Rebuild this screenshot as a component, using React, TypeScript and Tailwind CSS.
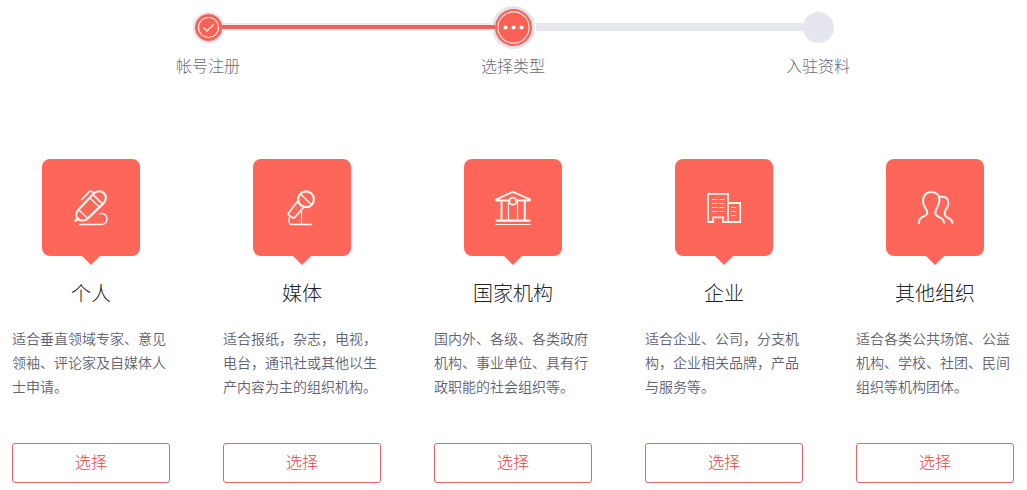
import type { ReactNode } from "react";

type StepState = "done" | "current" | "todo";

const steps: { label: string; state: StepState }[] = [
  { label: "帐号注册", state: "done" },
  { label: "选择类型", state: "current" },
  { label: "入驻资料", state: "todo" },
];

function Icon({ children }: { children: ReactNode }) {
  return (
    <svg
      viewBox="0 0 37 37"
      className="h-[37px] w-[37px]"
      fill="none"
      stroke="#fff6ee"
      strokeWidth="2"
      strokeLinecap="round"
      strokeLinejoin="round"
      aria-hidden="true"
    >
      {children}
    </svg>
  );
}

const PenIcon = () => (
  <Icon>
    <path d="M5 29.8C2.8 27.6 2.6 24 5 21.2L20.4 4.8C24 1.4 28.4 1.6 31 4.2C33.7 6.9 33.6 11.2 30.4 14.4L14.6 29.6C11.6 32.2 7.6 32 5 29.8Z" strokeWidth="2.2" />
    <path d="M2.4 31.8L4.4 30.2" strokeWidth="2.4" />
    <path d="M6.2 21.2L14.4 29M16.8 9L26.4 18" strokeWidth="1.4" />
    <path d="M20.2 5.8L29.4 14.8" strokeWidth="1.8" />
    <path d="M8.8 10.4L17 2L19.8 3" strokeWidth="1.8" />
    <path d="M27 24.6C31 23.8 34 26.4 33.9 29.8C33.8 33.4 31.6 35.5 28 35.5H6.5" strokeWidth="1.4" />
  </Icon>
);

const MicIcon = () => (
  <Icon>
    <circle cx="22" cy="10.3" r="7.9" strokeWidth="2.2" />
    <path d="M16.5 5L27.5 15.8" strokeWidth="1.4" />
    <path d="M13.6 12.4L4.8 23.8C4 25 4.3 26 5.4 26.8L8.2 28.6C9.4 29.3 10.2 28.8 11 28L18.8 19.4" strokeWidth="1.8" />
    <path d="M6 27.4C4.4 29 4.6 34 6.4 35.5H27.6" strokeWidth="1.3" />
    <path d="M17.5 21.6V35.4" strokeWidth="1.2" />
  </Icon>
);

const InstitutionIcon = () => (
  <Icon>
    <path d="M14.4 11.5H1.2V10.4L17.8 2.8L34.8 10.4V11.5H21.4" />
    <circle cx="17.8" cy="12.2" r="3.5" strokeWidth="1.8" />
    <path d="M6.5 12.5V31M29.8 12.5V31" />
    <path d="M13.5 13V31M22.5 13V31" strokeWidth="1.2" />
    <path d="M1.5 31.7H34.5" strokeWidth="2.2" />
    <path d="M.8 35.5H35.2" strokeWidth="1.1" />
  </Icon>
);

const BuildingIcon = () => (
  <Icon>
    <path
      d="M22 33H17.2V28.4H7.2V33H2V4.8H22V33H34.2V14H22"
      strokeWidth="1.8"
      strokeLinejoin="miter"
    />
    <path
      d="M6.5 10.5H11M13.5 10.5H18M6.5 14.5H11M13.5 14.5H18M6.5 18.5H11M13.5 18.5H18M6.5 22.5H11M13.5 22.5H18M25.5 18.5H29.5M25.5 22.5H29.5M25.5 26.5H29.5"
      strokeWidth="1.2"
    />
  </Icon>
);

const PeopleIcon = () => (
  <Icon>
    <path d="M1.8 34C2 30.6 2.6 29.2 5.4 28C8.2 26.8 9.8 26.2 10.2 24.4C10.6 22 9.6 20.8 8.2 18.8C7.4 17.6 6.4 16 6.2 13.8C5.4 7.4 8.4 3.2 14 3.1C19.6 3 22.8 6.4 22.4 11.6C22.2 15 21 17 20 18.8C18.8 20.8 18 22.4 18.4 24.8C18.8 26.8 20.6 27.6 23 28.6C26 29.8 26.8 30.8 27.1 34" />
    <path d="M23.4 7.8C28.2 7 31.4 9.4 31.4 14C31.4 17.2 29.8 19 28.8 20.6C27.8 22.4 27.2 23.8 27.8 25.8C28.4 27.6 29.6 28.4 31.4 29.2C34.2 30.4 35.2 31.4 35.4 34" />
  </Icon>
);

const types: { title: string; text: string; icon: ReactNode }[] = [
  { title: "个人", text: "适合垂直领域专家、意见领袖、评论家及自媒体人士申请。", icon: <PenIcon /> },
  { title: "媒体", text: "适合报纸，杂志，电视，电台，通讯社或其他以生产内容为主的组织机构。", icon: <MicIcon /> },
  { title: "国家机构", text: "国内外、各级、各类政府机构、事业单位、具有行政职能的社会组织等。", icon: <InstitutionIcon /> },
  { title: "企业", text: "适合企业、公司，分支机构，企业相关品牌，产品与服务等。", icon: <BuildingIcon /> },
  { title: "其他组织", text: "适合各类公共场馆、公益机构、学校、社团、民间组织等机构团体。", icon: <PeopleIcon /> },
];

function Track({ kind }: { kind: "none" | "active" | "idle" }) {
  if (kind === "none") return <span className="flex-1" />;
  if (kind === "idle") return <span className="h-2 flex-1 bg-[#e6e6ee]" />;
  return (
    <span className="z-10 flex h-2 flex-1 items-center bg-[#f0e9ef]">
      <span className="-mr-1 h-1 flex-1 bg-[#ea6459]" />
    </span>
  );
}

function StepNode({ state }: { state: StepState }) {
  if (state === "done") {
    return (
      <span className="flex size-[27px] items-center justify-center rounded-full bg-[#fb6157] ring-2 ring-[#ece2e8]">
        <svg viewBox="0 0 27 27" className="size-[27px]" fill="none" aria-hidden="true">
          <circle cx="13.5" cy="13.5" r="10" stroke="#ffeadb" strokeWidth="1.2" />
          <path d="M8.4 13.6L12 17L18.8 10.2" stroke="#ffeadb" strokeWidth="1.4" />
        </svg>
      </span>
    );
  }
  if (state === "current") {
    return (
      <span className="mx-1 flex size-[37px] items-center justify-center rounded-full bg-[#fb6157] ring-3 ring-[#e6e2ea]">
        <svg viewBox="0 0 37 37" className="size-[37px]" fill="none" aria-hidden="true">
          <circle cx="18.5" cy="18.5" r="15.6" stroke="#fff1e6" strokeWidth="1.1" />
          <g fill="#fff6ee">
            <circle cx="10.5" cy="18.5" r="2.1" />
            <circle cx="18.5" cy="18.5" r="2.1" />
            <circle cx="26.5" cy="18.5" r="2.1" />
          </g>
        </svg>
      </span>
    );
  }
  return <span className="size-[31px] rounded-full bg-[#e6e6ee]" />;
}

export default function App() {
  return (
    <main
      lang="zh-CN"
      className="bg-white pr-[13px] pb-2 pl-3 font-['Noto_Sans_CJK_SC',sans-serif] font-light"
    >
      <ol className="mx-auto grid max-w-[915px] grid-cols-3">
        {steps.map((step, i) => (
          <li key={step.label} aria-current={step.state === "current" ? "step" : undefined}>
            <div className="flex h-[54px] items-center">
              <Track kind={i === 0 ? "none" : step.state === "current" ? "active" : "idle"} />
              <StepNode state={step.state} />
              <Track kind={i === 2 ? "none" : step.state === "done" ? "active" : "idle"} />
            </div>
            <p className="text-center text-base leading-[22px] text-[#6b6b77]">{step.label}</p>
          </li>
        ))}
      </ol>

      <ul className="mt-[83px] grid grid-cols-5 gap-[53px]">
        {types.map((type) => (
          <li key={type.title} className="flex flex-col items-center">
            <div className="flex h-[97px] w-[98px] items-center justify-center rounded-lg bg-[#ff665a]">
              {type.icon}
            </div>
            <span className="border-x-[9px] border-t-[9px] border-x-transparent border-t-[#ff665a]" />
            <h2 className="mt-3 text-xl leading-8 font-light text-[#222222]">{type.title}</h2>
            <p className="mt-[17px] w-full text-sm leading-6 font-[350] text-[#626272]">{type.text}</p>
            <button
              type="button"
              aria-label={`选择 ${type.title}`}
              className="mt-[45px] h-10 w-full cursor-pointer rounded-[3px] border border-[#e0666c] bg-white pb-1 text-base text-[#e8433f]"
            >
              选择
            </button>
          </li>
        ))}
      </ul>
    </main>
  );
}
